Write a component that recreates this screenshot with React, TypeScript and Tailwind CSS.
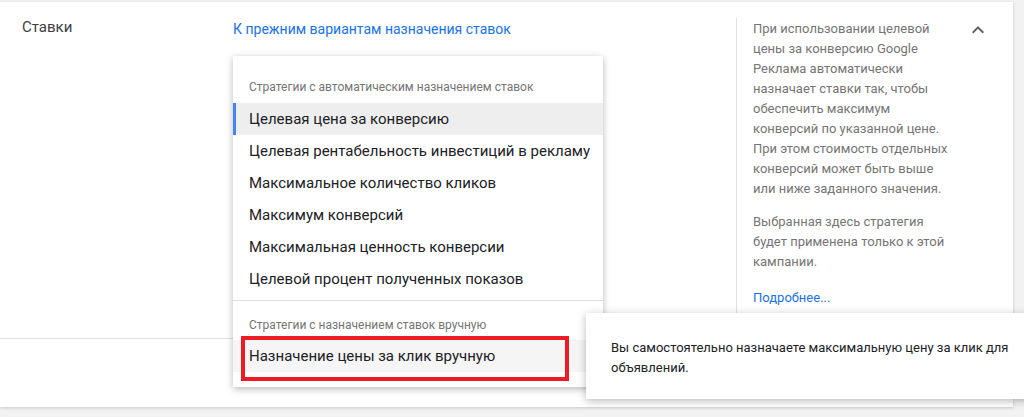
import React from "react";

const autoStrategies = [
  "Целевая цена за конверсию",
  "Целевая рентабельность инвестиций в рекламу",
  "Максимальное количество кликов",
  "Максимум конверсий",
  "Максимальная ценность конверсии",
  "Целевой процент полученных показов",
];

const helpLines = [
  "При использовании целевой",
  "цены за конверсию Google",
  "Реклама автоматически",
  "назначает ставки так, чтобы",
  "обеспечить максимум",
  "конверсий по указанной цене.",
  "При этом стоимость отдельных",
  "конверсий может быть выше",
  "или ниже заданного значения.",
];

const App = () => {
  return (
    <div className="relative w-[1024px] h-[417px] overflow-hidden bg-[#f2f2f2] font-['Roboto',sans-serif]">
      <div className="pt-[2px]">
        <div className="relative w-[1013px] h-[405px] bg-white shadow-[0_1px_3px_rgba(0,0,0,0.18)]">
          <div className="flex h-[337px] border-b border-[#e0e0e0]">
            <div className="w-[233px] pl-[22px] pt-[15px] text-[15px] leading-[20px] text-[#3c4043]">
              Ставки
            </div>

            <div className="relative w-[503px] pt-[15px]">
              <a
                href="#"
                className="text-[14px] leading-[20px] text-[#1a73e8]"
              >
                К прежним вариантам назначения ставок
              </a>

              {/* dropdown menu */}
              <div className="absolute left-0 top-[54px] z-10 w-[370px] bg-white pt-[15px] pb-[15px] shadow-[0_2px_7px_rgba(0,0,0,0.28)]">
                <div className="flex h-8 items-center pl-4 text-[12px] text-[#757575]">
                  Стратегии с автоматическим назначением ставок
                </div>
                {autoStrategies.map((item, i) => (
                  <div
                    key={item}
                    className={
                      i === 0
                        ? "flex h-8 items-center border-l-[3px] border-[#4285f4] bg-[#eeeeee] pl-[13px] text-[15px] text-[#202124]"
                        : "flex h-8 items-center pl-4 text-[15px] text-[#202124]"
                    }
                  >
                    {item}
                  </div>
                ))}
                <div className="h-[5px]" />
                <div className="border-t border-[#e0e0e0]" />
                <div className="h-[39px] pl-4 pt-[14px] text-[12px] leading-[20px] text-[#757575]">
                  Стратегии с назначением ставок вручную
                </div>
                <div className="flex h-8 items-center bg-[#f5f5f5] pl-4 text-[15px] text-[#202124]">
                  Назначение цены за клик вручную
                </div>
              </div>
            </div>

            <div className="mt-4 mb-4 w-[224px] border-l border-[#e0e0e0] pl-4 pt-[1px] text-[13px] leading-[20px] text-[#757575]">
              <p>
                {helpLines.map((line) => (
                  <span key={line} className="block">
                    {line}
                  </span>
                ))}
              </p>
              <p className="mt-[13px]">
                <span className="block">Выбранная здесь стратегия</span>
                <span className="block">будет применена только к этой</span>
                <span className="block">кампании.</span>
              </p>
              <a href="#" className="mt-4 block text-[#1a73e8]">
                Подробнее...
              </a>
            </div>

            <div className="ml-[6px] pt-4">
              <svg width="24" height="24" viewBox="0 0 24 24" fill="#5f6368">
                <path d="M7.41 15.41L12 10.83l4.59 4.58L18 14l-6-6-6 6z" />
              </svg>
            </div>
          </div>

          {/* annotation box */}
          <div className="absolute left-[241px] top-[334px] z-20 h-[45px] w-[328px] border-4 border-[#ed1c24]" />

          {/* tooltip */}
          <div className="absolute left-[586px] top-[311px] z-30 w-[460px] bg-white pt-[25px] pb-[21px] pl-[25px] shadow-[0_2px_8px_rgba(0,0,0,0.28)]">
            <p className="w-[405px] text-[13px] leading-[20px] text-[#202124]">
              Вы самостоятельно назначаете максимальную цену за клик для
              объявлений.
            </p>
          </div>
        </div>
      </div>
    </div>
  );
};

export default App;
